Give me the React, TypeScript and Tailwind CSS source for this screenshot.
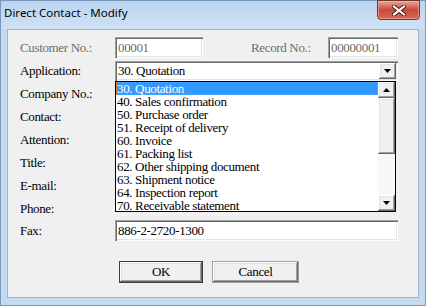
import React from 'react';

// Direct Contact - Modify dialog (Windows 7 basic theme look)

const labels = ['Company No.:', 'Contact:', 'Attention:', 'Title:', 'E-mail:', 'Phone:'];

const options = [
  '30. Quotation',
  '40. Sales confirmation',
  '50. Purchase order',
  '51. Receipt of delivery',
  '60. Invoice',
  '61. Packing list',
  '62. Other shipping document',
  '63. Shipment notice',
  '64. Inspection report',
  '70. Receivable statement',
];

const sunken =
  'bg-white shadow-[inset_1px_1px_0_#a0a0a0,inset_2px_2px_0_#696969,inset_-1px_-1px_0_#ffffff,inset_-2px_-2px_0_#e3e3e3]';

const raised =
  'bg-[#f0f0f0] shadow-[inset_-1px_-1px_0_#696969,inset_1px_1px_0_#ffffff,inset_-2px_-2px_0_#a0a0a0,inset_2px_2px_0_#e3e3e3]';

function Arrow({ up = false }: { up?: boolean }) {
  return (
    <svg width="7" height="4" viewBox="0 0 7 4" className="block">
      {up ? <path d="M3.5 0 L7 4 L0 4 Z" fill="#000" /> : <path d="M0 0 L7 0 L3.5 4 Z" fill="#000" />}
    </svg>
  );
}

function ArrowButton({ up = false, className = '' }: { up?: boolean; className?: string }) {
  return (
    <div className={`w-[17px] flex items-center justify-center ${raised} ${className}`}>
      <Arrow up={up} />
    </div>
  );
}

function DropList() {
  return (
    <div className="absolute left-0 top-[20px] w-[281px] h-[131px] bg-white border border-black flex z-10">
      <div className="flex-1 flex flex-col">
        {options.map((o, i) => (
          <div
            key={o}
            className={
              i === 0
                ? 'h-[13px] leading-[13px] pl-[1px] bg-[#3399ff] text-white outline outline-1 outline-dotted outline-[#e08a2c] -outline-offset-1'
                : 'h-[13px] leading-[13px] pl-[1px] text-black'
            }
          >
            {o}
          </div>
        ))}
      </div>
      <div className="w-[17px] flex flex-col bg-[repeating-conic-gradient(#f0f0f0_0_25%,#ffffff_0_50%)] bg-[length:2px_2px]">
        <ArrowButton up className="h-[16px]" />
        <div className={`h-[56px] ${raised}`} />
        <div className="flex-1" />
        <ArrowButton className="h-[16px]" />
      </div>
    </div>
  );
}

export default function App() {
  return (
    <div className="w-[426px] h-[306px] bg-[#c5daf0] flex flex-col border border-[#7b99bf] font-['Liberation_Serif',serif] text-[13px] tracking-[-0.35px]">
      {/* Title bar */}
      <div className="h-[28px] flex items-start justify-between bg-gradient-to-b from-[#bcd4ee] to-[#cfe0f4]">
        <span className="pl-[3px] pt-[4px] text-[11.5px] leading-[16px] tracking-normal text-black font-['Noto_Sans',sans-serif]">
          Direct Contact - Modify
        </span>
        <div className="mr-[5px] -mt-[1px] w-[43px] h-[20px] rounded-b-[4px] border border-[#6e3530] bg-gradient-to-b from-[#e5a595] via-[#c9483a] to-[#d46a55] flex items-center justify-center shadow-[inset_0_0_0_1px_rgba(255,200,190,0.5)]">
          <svg width="14" height="11" viewBox="0 0 14 11">
            <path d="M2 1.5 L12 9.5 M12 1.5 L2 9.5" stroke="#3a1a18" strokeWidth="4" strokeLinecap="square" />
            <path d="M2 1.5 L12 9.5 M12 1.5 L2 9.5" stroke="#ffffff" strokeWidth="2.2" strokeLinecap="square" />
          </svg>
        </div>
      </div>

      {/* Client area */}
      <div className="mx-[6px] mb-[7px] flex-1 bg-[#f0f0f0] border border-[#9fb3cb] pl-[12px] pr-[20px] pt-[7px] flex flex-col">
        {/* Customer / Record */}
        <div className="h-[21px] flex items-center">
          <span className="w-[95px] text-[#6d6d6d]">Customer No.:</span>
          <div className={`w-[88px] h-[21px] pl-[3px] leading-[21px] text-[#6d6d6d] ${sunken}`}>00001</div>
          <span className="ml-auto w-[77px] text-[#6d6d6d]">Record No.:</span>
          <div className={`w-[70px] h-[21px] pl-[3px] leading-[21px] text-[#6d6d6d] ${sunken}`}>00000001</div>
        </div>

        {/* Application */}
        <div className="mt-[3px] h-[20px] flex items-center">
          <span className="w-[95px] text-black">Application:</span>
          <div className="relative flex-1 h-[20px]">
            <div className={`h-[20px] flex items-center ${sunken} p-[2px]`}>
              <span className="flex-1 pl-[1px] leading-[16px] text-black">30. Quotation</span>
              <ArrowButton className="h-[16px]" />
            </div>
            <DropList />
          </div>
        </div>

        {/* Labels partly hidden behind the open list */}
        <div className="mt-[1px] flex flex-col">
          {labels.map((l) => (
            <div key={l} className="h-[23px] flex items-center text-black">
              {l}
            </div>
          ))}
        </div>

        {/* Fax */}
        <div className="h-[21px] flex items-center">
          <span className="w-[95px] text-black">Fax:</span>
          <div className={`flex-1 h-[21px] pl-[3px] leading-[21px] text-black ${sunken}`}>886-2-2720-1300</div>
        </div>

        {/* Buttons */}
        <div className="mt-[20px] pl-[99px] flex gap-[9px]">
          <button className={`w-[84px] h-[22px] text-black border border-[#3c3c3c] ${raised}`}>OK</button>
          <button className={`w-[87px] h-[22px] text-black border border-[#a0a0a0] ${raised}`}>Cancel</button>
        </div>
      </div>
    </div>
  );
}
